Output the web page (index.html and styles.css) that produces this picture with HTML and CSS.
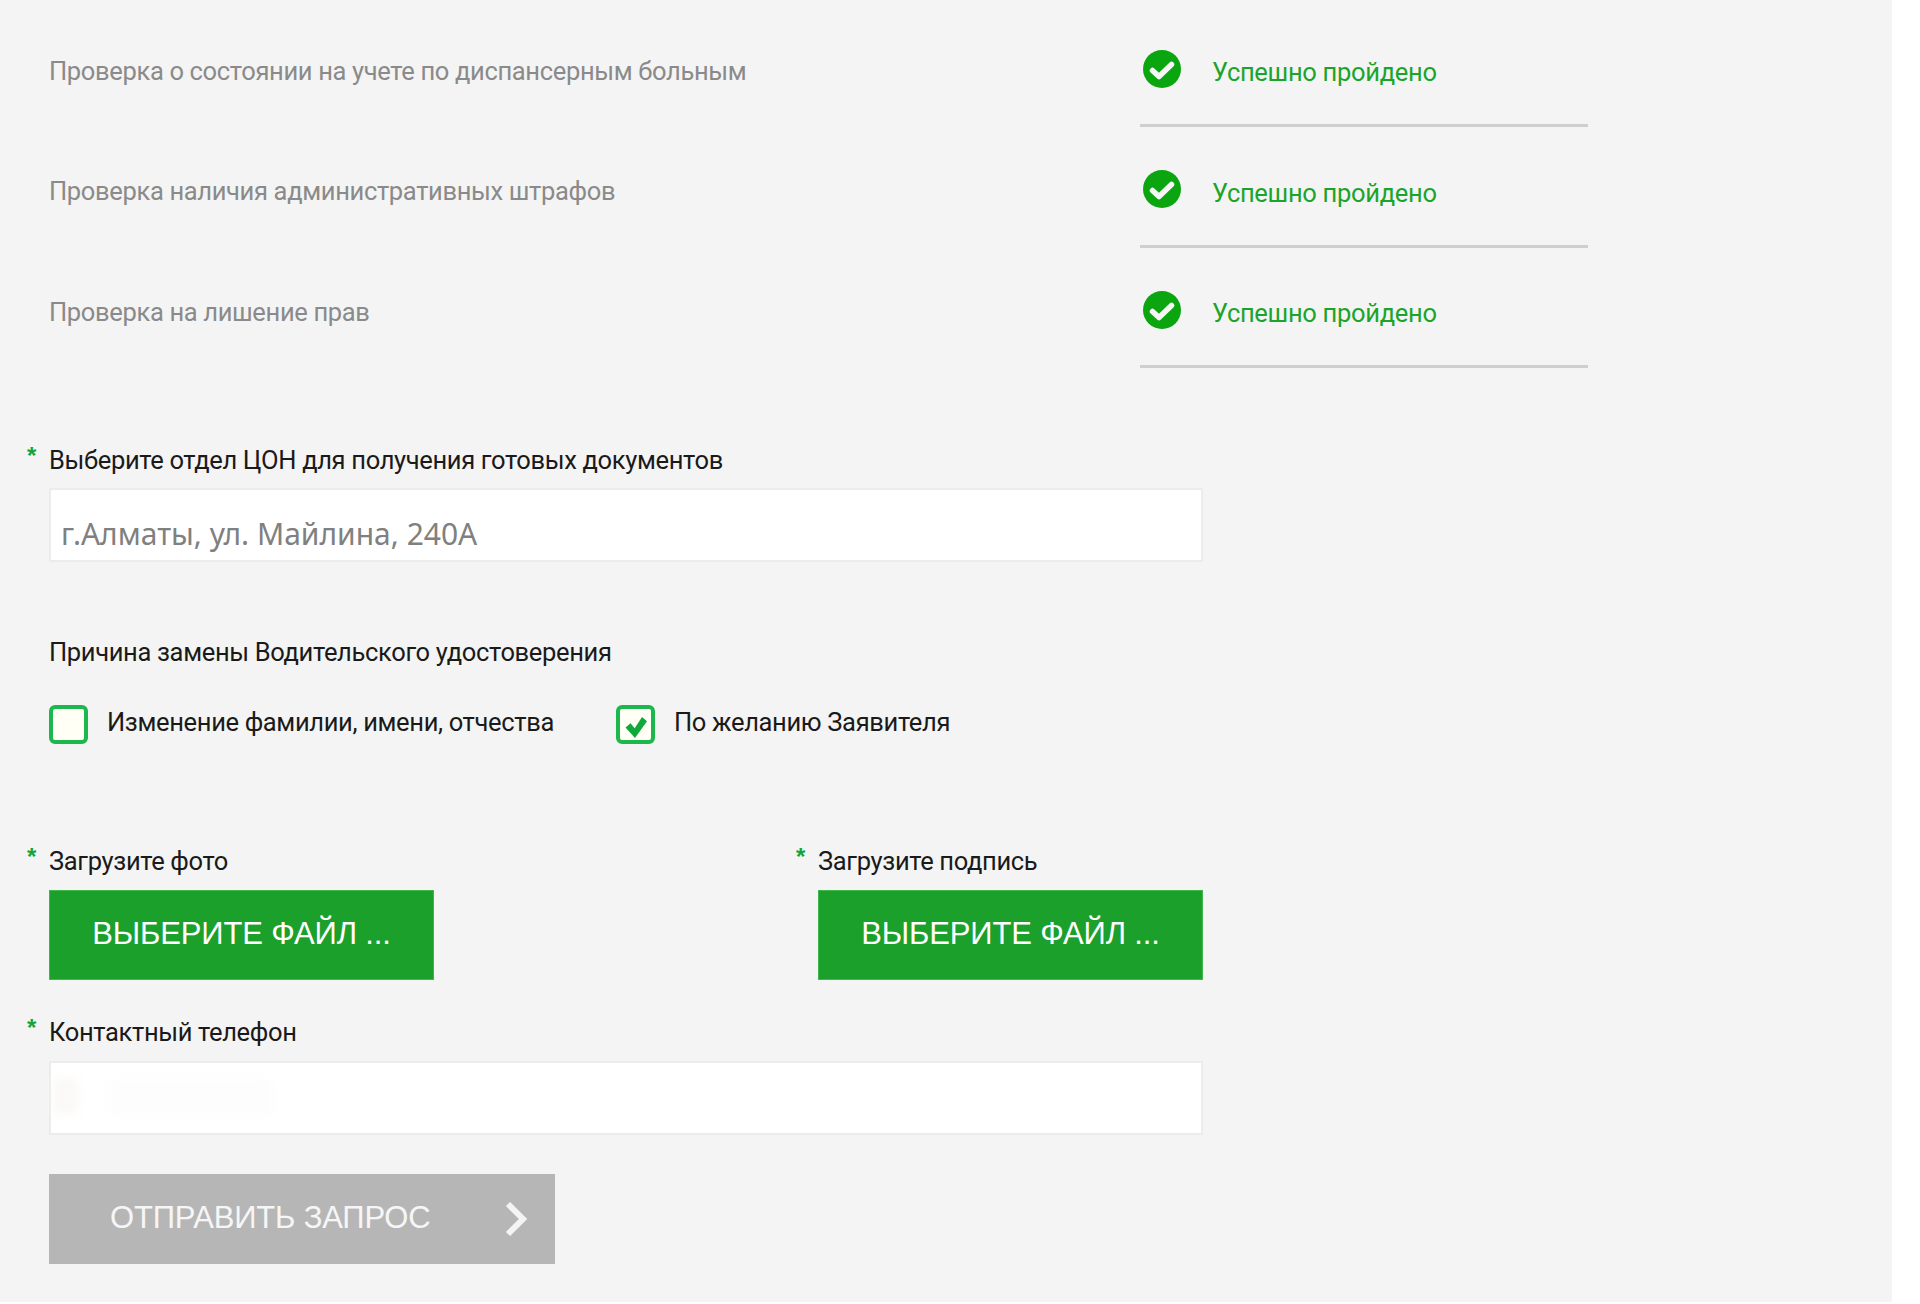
FILE: index.html
```html
<!DOCTYPE html>
<html lang="ru">
<head>
<meta charset="utf-8">
<title>Проверки и запрос</title>
<link rel="stylesheet" href="styles.css">
</head>
<body>
<main class="page">
  <section class="checks">
    <div class="check">
      <span class="check-name">Проверка о состоянии на учете по диспансерным больным</span>
      <div class="check-result">
        <svg class="ok-icon" viewBox="0 0 38 38"><circle cx="19" cy="19" r="19" fill="#0aa50f"/><path d="M9.5 20.5L16 26.5 28.5 14.5" fill="none" stroke="#f6f6f6" stroke-width="5.5" stroke-linecap="round" stroke-linejoin="round"/></svg>
        <span class="ok-text">Успешно пройдено</span>
      </div>
    </div>
    <div class="check">
      <span class="check-name">Проверка наличия административных штрафов</span>
      <div class="check-result">
        <svg class="ok-icon" viewBox="0 0 38 38"><circle cx="19" cy="19" r="19" fill="#0aa50f"/><path d="M9.5 20.5L16 26.5 28.5 14.5" fill="none" stroke="#f6f6f6" stroke-width="5.5" stroke-linecap="round" stroke-linejoin="round"/></svg>
        <span class="ok-text">Успешно пройдено</span>
      </div>
    </div>
    <div class="check">
      <span class="check-name">Проверка на лишение прав</span>
      <div class="check-result">
        <svg class="ok-icon" viewBox="0 0 38 38"><circle cx="19" cy="19" r="19" fill="#0aa50f"/><path d="M9.5 20.5L16 26.5 28.5 14.5" fill="none" stroke="#f6f6f6" stroke-width="5.5" stroke-linecap="round" stroke-linejoin="round"/></svg>
        <span class="ok-text">Успешно пройдено</span>
      </div>
    </div>
  </section>

  <section class="form">
    <div class="field field-office">
      <label class="label required">Выберите отдел ЦОН для получения готовых документов</label>
      <div class="input"><span class="input-value">г.Алматы, ул. Майлина, 240А</span></div>
    </div>

    <div class="reason">
      <div class="label">Причина замены Водительского удостоверения</div>
      <div class="options">
        <div class="option option-first">
          <span class="box"></span>
          <span class="label">Изменение фамилии, имени, отчества</span>
        </div>
        <div class="option">
          <span class="box"><svg class="box-tick" viewBox="0 0 24 24"><path d="M1.5 12.5l5-4.2 4.2 5L18 2l5 4.2L11 23z" fill="#0fa83a"/></svg></span>
          <span class="label">По желанию Заявителя</span>
        </div>
      </div>
    </div>

    <div class="uploads">
      <div class="upload">
        <div class="label required">Загрузите фото</div>
        <button class="btn-file" type="button">Выберите файл ...</button>
      </div>
      <div class="upload">
        <div class="label required">Загрузите подпись</div>
        <button class="btn-file" type="button">Выберите файл ...</button>
      </div>
    </div>

    <div class="field field-phone">
      <label class="label required">Контактный телефон</label>
      <div class="input input-phone">
        <span class="smudge smudge-a"></span>
        <span class="smudge smudge-b"></span>
      </div>
    </div>

    <button class="btn-submit" type="button">
      <span>Отправить запрос</span>
      <svg class="chevron" viewBox="0 0 24 36"><path d="M4 3l15 15L4 33" fill="none" stroke="#f4f4f4" stroke-width="6"/></svg>
    </button>
  </section>
</main>
</body>
</html>
```
FILE: styles.css
```css
* { box-sizing: border-box; }
html, body { margin: 0; background: #fff; }
.page {
  width: 1892px;
  height: 1302px;
  background: #f4f4f4;
  padding: 0 0 0 49px;
  font-family: "Noto Sans", sans-serif;
  overflow: hidden;
}
.checks { display: flex; flex-direction: column; padding-top: 30px; }
.check { display: flex; height: 120.5px; }
.check-name {
  width: 1091px;
  font-family: Roboto, sans-serif;
  font-size: 25.5px;
  letter-spacing: -0.34px;
  line-height: 40px;
  margin-top: 20.5px;
  color: #8a8a8a;
}
.check-result {
  width: 448px;
  height: 97px;
  border-bottom: 3px solid #cfcfcf;
  display: flex;
  align-items: flex-start;
  padding-left: 3px;
}
.ok-icon { width: 38px; height: 38px; flex: none; margin-top: 19.5px; }
.ok-text {
  margin-left: 31px;
  margin-top: 22px;
  font-family: Roboto, sans-serif;
  font-size: 25.5px;
  letter-spacing: -0.3px;
  line-height: 40px;
  color: #1aa52a;
}
.form { width: 1154px; padding-top: 50.5px; }
.label {
  font-family: Roboto, sans-serif;
  font-size: 25.5px;
  letter-spacing: -0.34px;
  line-height: 36px;
  color: #1a1a1a;
}
.required { position: relative; display: block; }
.required::before {
  content: "*";
  position: absolute;
  left: -22px;
  top: -4px;
  color: #12a53a;
  font-family: "Liberation Sans", sans-serif;
  font-size: 24px;
  font-weight: 700;
}
.field .label { margin-bottom: 10px; }
.field-phone .label { margin-bottom: 11px; }
.input {
  height: 74px;
  background: #fff;
  border: 2px solid #ececec;
  padding: 22px 0 0 10px;
}
.input-value { font-size: 30px; line-height: 44px; color: #808080; }
.input-phone { display: flex; padding: 0; }
.smudge { display: block; filter: blur(5px); }
.smudge-a { width: 24px; height: 36px; margin: 15px 0 0 3px; background: #faf9f7; }
.smudge-b { width: 166px; height: 38px; margin: 16px 0 0 30px; background: #fdfdfd; }
.reason { margin-top: 72px; }
.options { display: flex; margin-top: 34px; }
.option { display: flex; align-items: flex-start; }
.option-first { width: 567px; }
.option .label { margin-left: 19px; line-height: 36px; }
.box {
  width: 39px;
  height: 39px;
  margin-top: 1px;
  border: 4px solid #1db84d;
  border-radius: 6px;
  background: #fffff6;
  display: flex;
  align-items: center;
  justify-content: center;
}
.box-tick { width: 24px; height: 24px; margin-top: 5px; flex: none; }
.uploads { display: flex; justify-content: space-between; margin-top: 99px; }
.upload { width: 385px; }
.upload .label { margin-bottom: 11px; }
.btn-file {
  display: block;
  width: 385px;
  height: 90px;
  background: #1ca02c;
  border: 1px solid #3cb84c;
  color: #fff;
  font-family: "Liberation Sans", sans-serif;
  font-size: 31px;
  letter-spacing: -0.15px;
  text-transform: uppercase;
  padding: 0 0 3px;
}
.field-phone { margin-top: 34px; }
.btn-submit {
  display: flex;
  align-items: center;
  margin-top: 39px;
  width: 506px;
  height: 90px;
  background: #b6b6b6;
  border: 0;
  padding: 0 27px 0 61px;
  justify-content: space-between;
  color: #f6f6f6;
  font-family: "Liberation Sans", sans-serif;
  font-size: 31px;
  letter-spacing: -0.18px;
  text-transform: uppercase;
}
.btn-submit span { margin-bottom: 2px; }
.chevron { width: 24px; height: 36px; }
```
